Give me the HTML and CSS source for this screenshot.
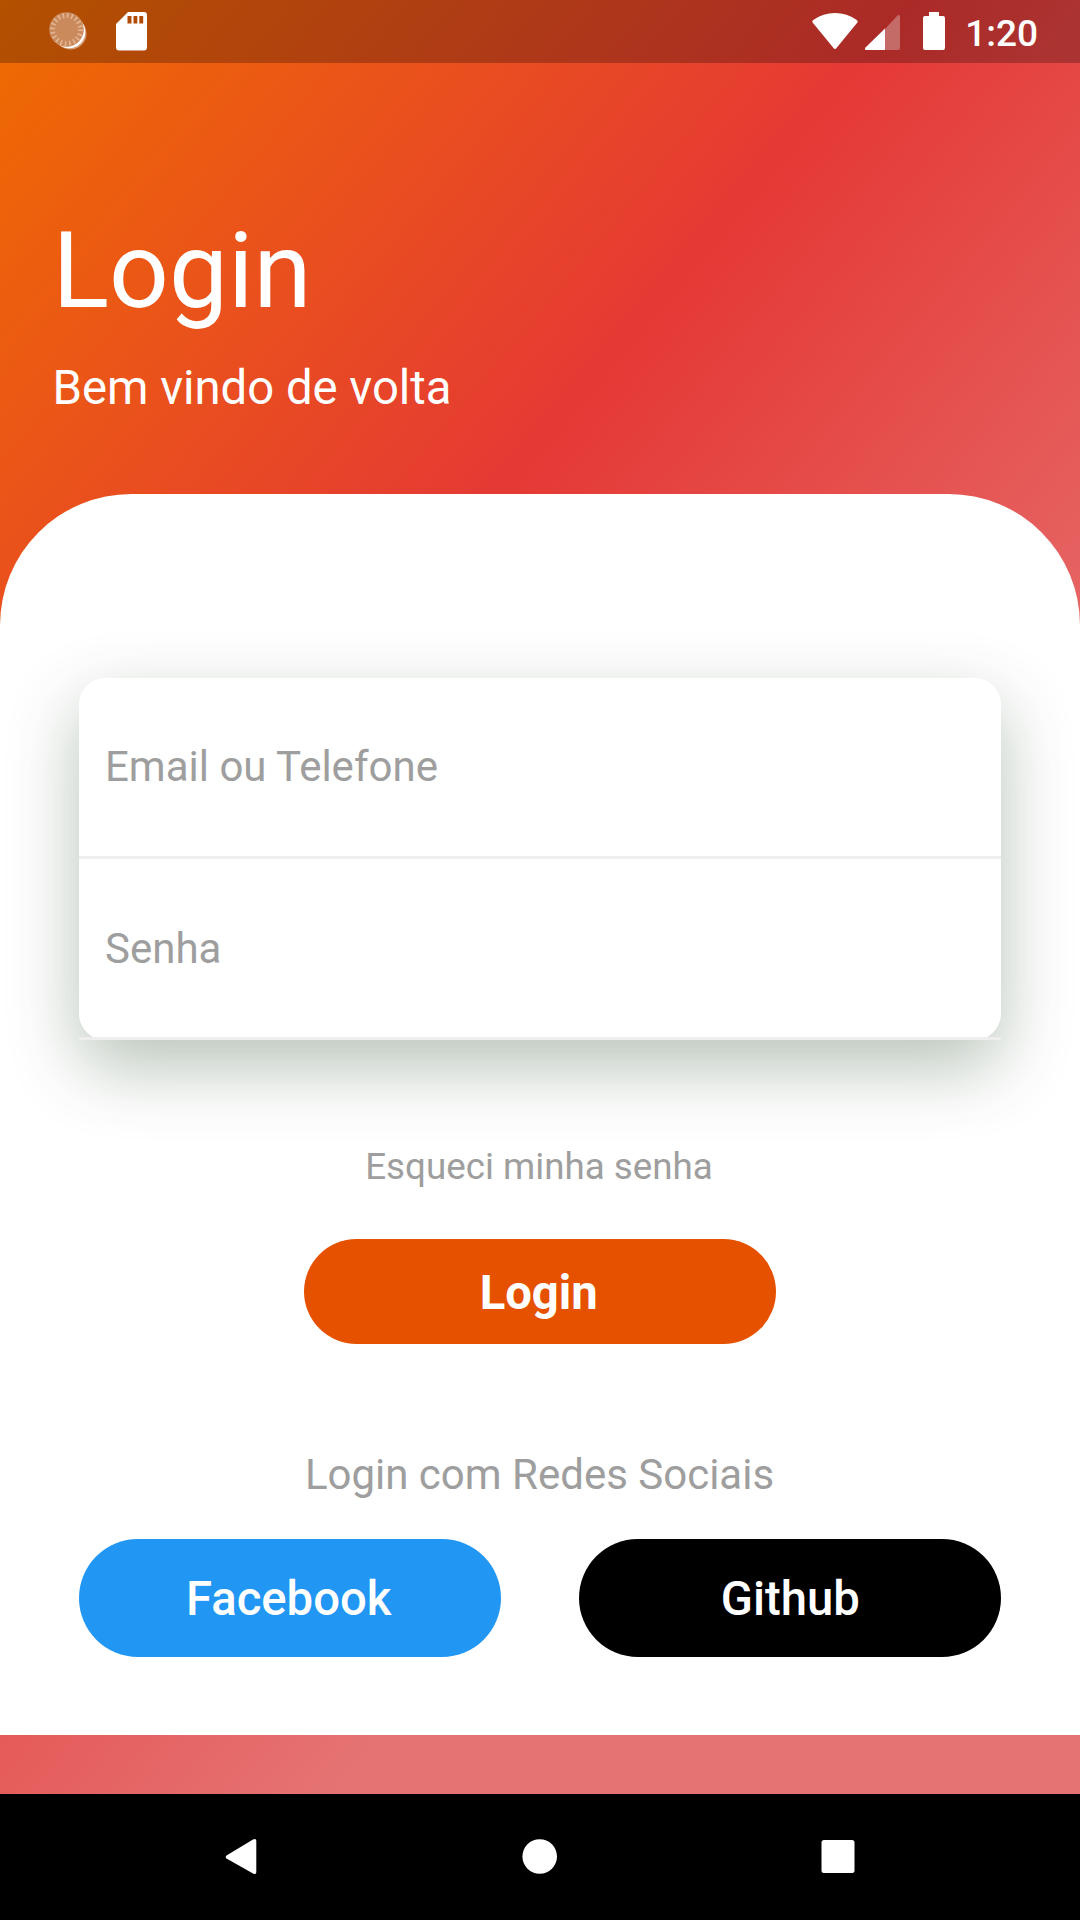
FILE: index.html
```html
<!DOCTYPE html>
<html lang="pt-BR">
<head>
<meta charset="utf-8">
<title>Login</title>
<link rel="stylesheet" href="styles.css">
</head>
<body>
<div class="screen">
  <div class="status-bar">
    <div class="status-left">
      <svg class="icon-sync" width="40" height="40" viewBox="0 0 40 40">
        <circle cx="21.500" cy="21.500" r="16" fill="#fff" fill-opacity=".45"/>
        <circle cx="20" cy="20" r="16.300" fill="#fff"/>
        <circle cx="17.500" cy="17.500" r="17.300" fill="#cb8a5b"/>
        <circle cx="17.500" cy="17.500" r="14" fill="none" stroke="#e0b697" stroke-width="5" stroke-dasharray="1.600 2.798"/>
      </svg>
      <svg class="icon-sd" width="31" height="39" viewBox="0 0 31 39">
        <path fill="#fff" fill-rule="evenodd" d="M12 0H28Q31 0 31 3V35Q31 38.500 28 38.500H3Q0 38.500 0 35V12ZM11.500 4V11.500H15.500V4ZM17.500 4V11.500H21.300V4ZM23.300 4V11.500H27.200V4Z"/>
      </svg>
    </div>
    <div class="status-right">
      <svg width="46" height="37" viewBox="0 0 46 37"><path fill="#fff" d="M.6 9.500Q-.2 8 1.300 7Q11 0 23 0T44.700 7Q46.200 8 45.400 9.500L24.500 35Q23 37 21.500 35Z"/></svg>
      <svg class="icon-signal" width="35" height="35" viewBox="0 0 35 35"><path fill="#fff" fill-opacity=".3" d="M20 14L32 1Q35-1.500 35 2V33Q35 35 33 35H20Z"/><path fill="#fff" d="M20 13.500V35H1.500Q-1 35 .5 32.500Z"/></svg>
      <svg class="icon-battery" width="22" height="38" viewBox="0 0 22 38"><path fill="#fff" d="M6 0H16V4H20Q22 4 22 6V36Q22 38 20 38H2Q0 38 0 36V6Q0 4 2 4H6Z"/></svg>
      <span class="clock">1:20</span>
    </div>
  </div>

  <header class="header">
    <h1 class="title">Login</h1>
    <p class="subtitle">Bem vindo de volta</p>
  </header>

  <main class="sheet">
    <div class="fields">
      <div class="field email">Email ou Telefone</div>
      <div class="field">Senha</div>
    </div>
    <p class="forgot">Esqueci minha senha</p>
    <div class="button login-button">Login</div>
    <p class="social-label">Login com Redes Sociais</p>
    <div class="social-row">
      <div class="button facebook">Facebook</div>
      <div class="button github">Github</div>
    </div>
  </main>

  <nav class="nav-bar">
    <svg width="36" height="38" viewBox="0 0 36 38"><path fill="#fff" d="M3.500 17.500L30 1.500Q33.300 0 33.300 3V34Q33.300 37 30 35.500L3.500 20.500Q1.900 19 3.500 17.500Z"/></svg>
    <svg width="36" height="36" viewBox="0 0 36 36"><circle cx="17.700" cy="17.500" r="17.300" fill="#fff"/></svg>
    <svg width="36" height="36" viewBox="0 0 36 36"><rect x="1.500" y="1" width="33" height="33" rx="2.500" fill="#fff"/></svg>
  </nav>
</div>
</body>
</html>
```
FILE: styles.css
```css
* {
  box-sizing: border-box;
}

body {
  margin: 0;
  font-family: Roboto, sans-serif;
}

h1,
p {
  margin: 0;
  font-weight: 400;
}

svg {
  display: block;
}

.screen {
  display: flex;
  flex-direction: column;
  width: 1080px;
  height: 1920px;
  overflow: hidden;
  background: linear-gradient(129.71deg, #ef6c00 0, #e53935 702px, #e57373 1404px);
}

.status-bar {
  display: flex;
  justify-content: space-between;
  height: 63px;
  padding: 12px 42px 0 49px;
  background: rgba(0, 0, 0, 0.25);
}

.status-left,
.status-right {
  display: flex;
  align-items: flex-start;
}

.icon-sd {
  margin-left: 27px;
}

.status-right svg {
  margin-top: 1px;
}

.status-right .icon-signal {
  margin: 3px 0 0 7px;
}

.status-right .icon-battery {
  margin: 0 0 0 23px;
}

.clock {
  margin-left: 20px;
  color: #fff;
  font-size: 37px;
  font-weight: 500;
  line-height: 43px;
}

.header {
  height: 431px;
  padding: 147px 52.5px 0;
  color: #fff;
}

.title {
  font-size: 105px;
  line-height: 124px;
}

.subtitle {
  margin-top: 27px;
  font-size: 47.25px;
  line-height: 55px;
}

.sheet {
  height: 1241.4px;
  padding: 183.5px 78.75px 0;
  border-radius: 131.25px 131.25px 0 0;
  background: #fff;
  color: #9e9e9e;
  text-align: center;
}

.fields {
  border-radius: 26.25px;
  background: #fff;
  box-shadow: 0 26.25px 70px rgba(27, 60, 30, 0.31);
  text-align: left;
}

.field {
  height: 181.25px;
  padding: 0 26.25px;
  border-bottom: 3px solid #eee;
  font-size: 42px;
  line-height: 179px;
}

.field.email {
  line-height: 177px;
}

.forgot {
  margin: 105px 1px 0 -1px;
  font-size: 36.75px;
  line-height: 43px;
}

.button {
  border-radius: 60px;
  color: #fff;
  font-size: 47.25px;
}

.login-button {
  width: 472.5px;
  height: 105px;
  margin: 51.3px auto 0;
  padding-right: 2.5px;
  background: #e65100;
  font-weight: 700;
  line-height: 108.5px;
}

.social-label {
  margin: 105.7px 0.5px 0 -0.5px;
  font-size: 42px;
  line-height: 49px;
}

.social-row {
  display: flex;
  justify-content: space-between;
  margin-top: 40.2px;
}

.social-row .button {
  width: 421.9px;
  height: 118px;
  font-weight: 500;
  line-height: 120px;
}

.social-row .facebook {
  padding-right: 2px;
  background: #2196f3;
}

.github {
  background: #000;
}

.nav-bar {
  display: flex;
  align-items: center;
  justify-content: space-between;
  height: 126px;
  margin-top: auto;
  padding: 0 224px;
  background: #000;
}

.nav-bar svg {
  margin-left: -1px;
}
```
